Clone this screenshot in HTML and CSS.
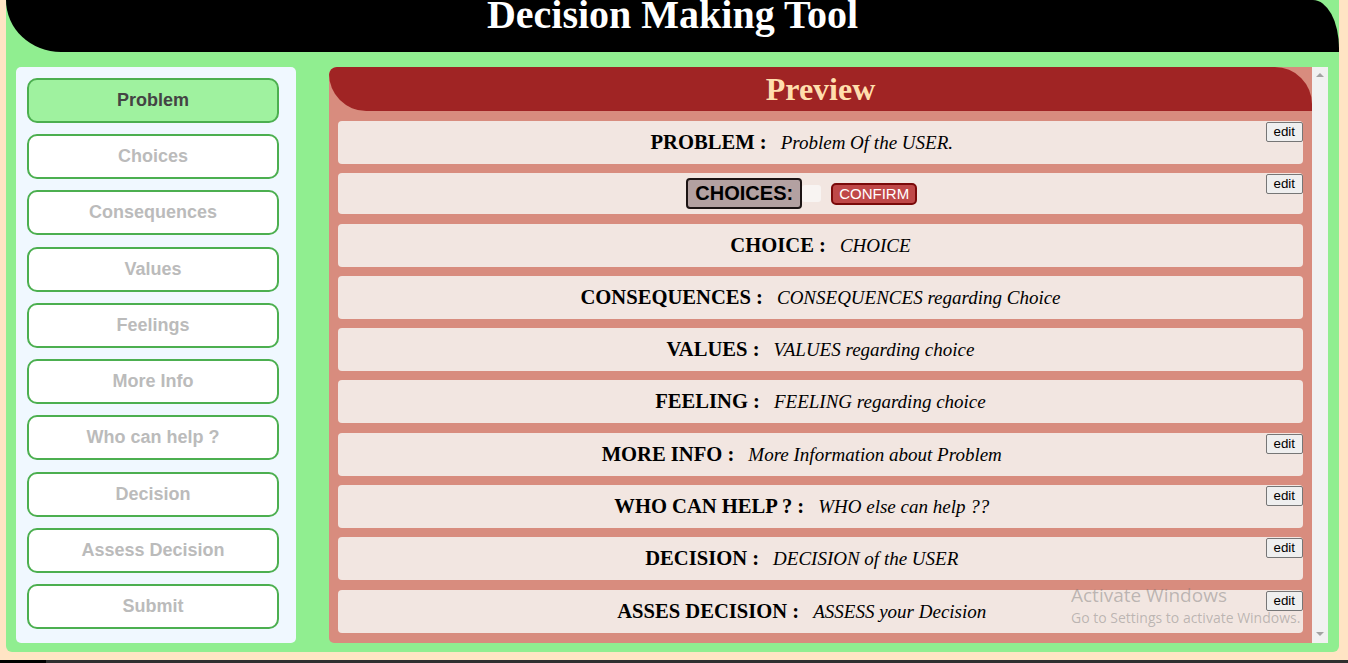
FILE: index.html
```html
<!DOCTYPE html>
<html lang="en">
<head>
<meta charset="utf-8">
<title>Decision Making Tool</title>
<link rel="stylesheet" href="styles.css">
</head>
<body>
<div class="app">
  <header class="topbar"><h1 class="title">Decision Making Tool</h1></header>
  <div class="main">
    <nav class="sidebar">
      <button class="step active">Problem</button>
      <button class="step">Choices</button>
      <button class="step">Consequences</button>
      <button class="step">Values</button>
      <button class="step">Feelings</button>
      <button class="step">More Info</button>
      <button class="step">Who can help ?</button>
      <button class="step">Decision</button>
      <button class="step">Assess Decision</button>
      <button class="step">Submit</button>
    </nav>
    <section class="preview">
      <div class="preview-body">
        <h2 class="preview-title">Preview</h2>
        <div class="rows">
          <div class="row">
            <div class="row-content"><span class="label">PROBLEM :</span><span class="value">Problem Of the USER.</span></div>
            <button class="edit">edit</button>
          </div>
          <div class="row row-choices">
            <div class="row-content choices">
              <span class="choices-tag">CHOICES:</span><span class="choices-input"></span><button class="confirm">CONFIRM</button>
            </div>
            <button class="edit">edit</button>
          </div>
          <div class="row">
            <div class="row-content"><span class="label">CHOICE :</span><span class="value">CHOICE</span></div>
          </div>
          <div class="row">
            <div class="row-content"><span class="label">CONSEQUENCES :</span><span class="value">CONSEQUENCES regarding Choice</span></div>
          </div>
          <div class="row">
            <div class="row-content"><span class="label">VALUES :</span><span class="value">VALUES regarding choice</span></div>
          </div>
          <div class="row">
            <div class="row-content"><span class="label">FEELING :</span><span class="value">FEELING regarding choice</span></div>
          </div>
          <div class="row">
            <div class="row-content"><span class="label">MORE INFO :</span><span class="value">More Information about Problem</span></div>
            <button class="edit">edit</button>
          </div>
          <div class="row">
            <div class="row-content"><span class="label">WHO CAN HELP ? :</span><span class="value">WHO else can help ??</span></div>
            <button class="edit">edit</button>
          </div>
          <div class="row">
            <div class="row-content"><span class="label">DECISION :</span><span class="value">DECISION of the USER</span></div>
            <button class="edit">edit</button>
          </div>
          <div class="row">
            <div class="row-content"><span class="label">ASSES DECISION :</span><span class="value">ASSESS your Decision</span></div>
            <button class="edit">edit</button>
          </div>
        </div>
      </div>
      <div class="scrollbar"><span class="arrow up"></span><span class="arrow down"></span></div>
    </section>
  </div>
</div>
<div class="watermark">
  <div class="wm-title">Activate Windows</div>
  <div class="wm-sub">Go to Settings to activate Windows.</div>
</div>
<footer class="taskbar"><span class="taskbar-start"></span></footer>
</body>
</html>
```
FILE: styles.css
```css
html, body {
  margin: 0;
  padding: 0;
}
body {
  background: #ffe4c4;
  font-family: "Liberation Serif", "Times New Roman", serif;
  overflow: hidden;
}
.app {
  margin-left: 6px;
  width: 1333px;
  height: 652px;
  background: #90ee90;
  border-radius: 0 0 6px 6px;
  display: flex;
  flex-direction: column;
}
.topbar {
  flex: none;
  height: 52px;
  background: #000;
  border-top-right-radius: 26px 48px;
  border-bottom-left-radius: 55px 52px;
  overflow: hidden;
}
.title {
  margin: -5px 0 0;
  font-size: 40px;
  line-height: 40px;
  font-weight: bold;
  color: #fff;
  text-align: center;
}
.main {
  flex: 1;
  min-height: 0;
  display: flex;
  gap: 33px;
  padding: 15px 11px 9px 10px;
}
.sidebar {
  flex: none;
  width: 280px;
  box-sizing: border-box;
  padding: 11px 17px 14px 11px;
  background: #f0f8ff;
  border-radius: 5px;
  display: flex;
  flex-direction: column;
  justify-content: space-between;
}
.step {
  height: 45px;
  padding: 0;
  border: 2px solid #4caf50;
  border-radius: 10px;
  background: #fff;
  font-family: "Liberation Sans", Arial, sans-serif;
  font-size: 18px;
  font-weight: bold;
  color: #bbbbbb;
}
.step.active {
  background: #9ff29f;
  color: #444;
}
.preview {
  flex: 1;
  display: flex;
  background: #d88c7e;
  border-radius: 8px 0 0 5px;
  overflow: hidden;
}
.preview-body {
  flex: 1;
  min-width: 0;
}
.preview-title {
  margin: 0;
  height: 44px;
  line-height: 44px;
  background: #a02424;
  color: #ffdead;
  font-size: 32px;
  font-weight: bold;
  text-align: center;
  border-radius: 8px 44px 0 44px;
}
.rows {
  padding: 10px 9px 0;
  display: flex;
  flex-direction: column;
  gap: 9.3px;
}
.row {
  height: 43px;
  display: flex;
  background: #f2e6e1;
  border-radius: 4px;
}
.row-choices {
  height: 41px;
}
.row-content {
  flex: 1;
  text-align: center;
  line-height: 43px;
  white-space: nowrap;
  color: #000;
}
.label {
  font-weight: bold;
  font-size: 20.6px;
}
.value {
  font-style: italic;
  font-size: 19px;
  margin-left: 14px;
}
.edit {
  align-self: flex-start;
  margin-top: 1px;
  padding: 1px 7px;
  font-family: "Liberation Sans", Arial, sans-serif;
  font-size: 13.33px;
  line-height: 16px;
  color: #000;
  background: #efefef;
  border: 1px solid #767676;
  border-radius: 2px;
}
.choices {
  display: flex;
  justify-content: center;
  align-items: center;
}
.choices-tag {
  padding: 2px 7px;
  line-height: 23px;
  font-family: "Liberation Sans", Arial, sans-serif;
  font-size: 20px;
  font-weight: bold;
  color: #000;
  background: #b3a1a1;
  border: 2px solid #1c1414;
  border-radius: 4px;
}
.choices-input {
  width: 19px;
  height: 17px;
  background: #f8f4f2;
  border-radius: 3px;
}
.confirm {
  margin-left: 10px;
  height: 22px;
  padding: 0 6px;
  font-family: "Liberation Sans", Arial, sans-serif;
  font-size: 15px;
  line-height: 18px;
  color: #fff;
  background: #bf4848;
  border: 2px solid #7a0a0a;
  border-radius: 5px;
}
.scrollbar {
  flex: none;
  width: 16px;
  background: #f1f1f1;
  display: flex;
  flex-direction: column;
  justify-content: space-between;
  align-items: center;
  padding: 6px 0 7px;
  box-sizing: border-box;
}
.arrow {
  width: 0;
  height: 0;
  border-left: 4px solid transparent;
  border-right: 4px solid transparent;
}
.arrow.up {
  border-bottom: 4px solid #a3a3a3;
}
.arrow.down {
  border-top: 4px solid #a3a3a3;
}
.watermark {
  position: absolute;
  left: 1071px;
  top: 583px;
  width: 234px;
  overflow: hidden;
  white-space: nowrap;
  font-family: "Open Sans", "Noto Sans", sans-serif;
  color: rgba(110, 110, 110, 0.42);
  pointer-events: none;
}
.wm-title {
  font-size: 19px;
  line-height: 25px;
}
.wm-sub {
  font-size: 14px;
  line-height: 19px;
}
.taskbar {
  margin-top: 8px;
  height: 3px;
  background: #2f2f2f;
  display: flex;
}
.taskbar-start {
  width: 46px;
  background: #000;
}
```
